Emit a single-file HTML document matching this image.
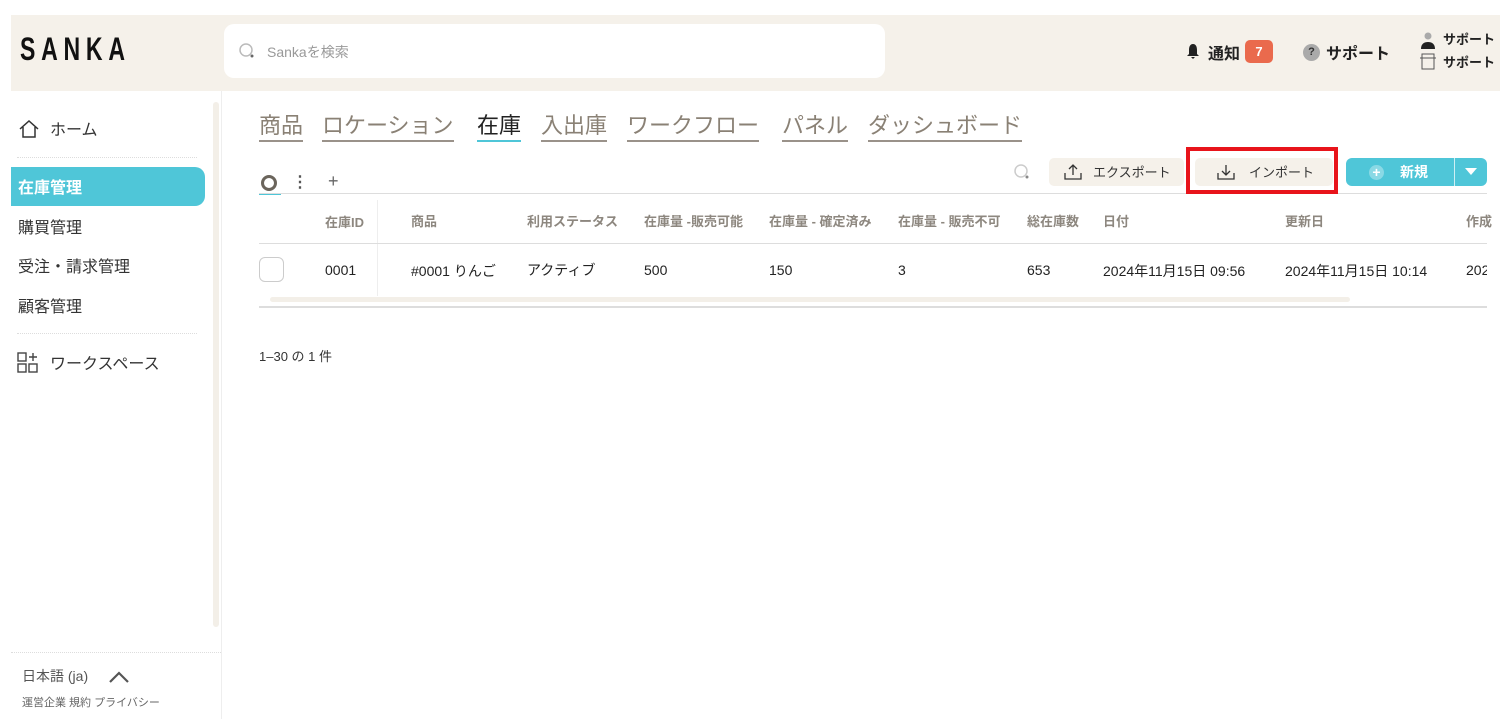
<!DOCTYPE html>
<html><head><meta charset="utf-8"><style>
*{box-sizing:border-box;margin:0;padding:0}
body{width:1500px;height:719px;background:#fff;font-family:"Liberation Sans","Noto Sans CJK JP",sans-serif;color:#222;position:relative;overflow:hidden}
.a{position:absolute}
.hdr{left:11px;top:15px;width:1489px;height:76px;background:#f5f1ea}
.logo{left:20px;top:31px;font-size:32px;font-weight:bold;letter-spacing:8px;color:#111;transform:scaleX(.72);transform-origin:left}
.search{left:224px;top:24px;width:661px;height:54px;background:#fff;border-radius:10px}
.search span{position:absolute;left:43px;top:18px;font-size:14px;color:#999}
.sb{left:11px;top:91px;width:211px;height:628px;border-right:1px solid #eee}
.nav{font-size:16px;color:#333}
.tab{font-size:22px;color:#8a8175;border-bottom:2px solid #9a928a;padding-bottom:0;line-height:28px}
.th{font-size:13px;color:#8d877f;font-weight:bold}
.td{font-size:14px;color:#222}
</style></head><body>
<div class="a hdr"></div>
<div class="a logo">SANKA</div>
<div class="a search"><svg class="a" style="left:14px;top:18px" width="18" height="18"><circle cx="8" cy="8" r="6" fill="none" stroke="#bbb" stroke-width="1.5"/><circle cx="14" cy="14" r="1.5" fill="#666"/></svg><span>Sankaを検索</span></div>
<svg class="a" style="left:1186px;top:43px" width="14" height="16"><path d="M7 1c-3 0-4 3-4 6v4l-2 2h12l-2-2V7c0-3-1-6-4-6zM5 14h4l-2 2z" fill="#222"/></svg>
<div class="a" style="left:1208px;top:40px;font-size:16px;font-weight:bold">通知</div>
<div class="a" style="left:1245px;top:40px;width:28px;height:23px;background:#ea6a4d;border-radius:5px;color:#fff;font-size:13px;font-weight:bold;text-align:center;line-height:23px">7</div>
<div class="a" style="left:1303px;top:44px;width:17px;height:17px;border-radius:50%;background:#aaa;color:#333;font-size:11px;font-weight:bold;text-align:center;line-height:17px">?</div>
<div class="a" style="left:1326px;top:40px;font-size:16px;font-weight:bold">サポート</div>
<svg class="a" style="left:1419px;top:31px" width="18" height="42"><circle cx="9" cy="5" r="3.5" fill="#aaa"/><path d="M2 18c0-5 3-7 7-7s7 2 7 7z" fill="#222"/><rect x="3" y="23" width="12" height="15" fill="none" stroke="#555"/><line x1="1" y1="27" x2="17" y2="27" stroke="#555"/></svg>
<div class="a" style="left:1443px;top:29px;font-size:13px;font-weight:bold">サポート</div>
<div class="a" style="left:1443px;top:52px;font-size:13px;font-weight:bold">サポート</div>

<div class="a sb"></div>
<div class="a" style="left:213px;top:102px;width:6px;height:525px;background:#f3efe8;border-radius:3px"></div>
<svg class="a" style="left:18px;top:119px" width="22" height="20"><path d="M2 10L11 2l9 8M5 8v10h12V8" fill="none" stroke="#333" stroke-width="1.5"/></svg>
<div class="a nav" style="left:50px;top:116px">ホーム</div>
<div class="a" style="left:17px;top:157px;width:180px;border-top:1px dotted #ddd"></div>
<div class="a" style="left:11px;top:167px;width:194px;height:39px;background:#4fc6d8;border-radius:0 10px 10px 0"></div>
<div class="a nav" style="left:18px;top:174px;color:#fff;font-weight:bold">在庫管理</div>
<div class="a nav" style="left:18px;top:214px">購買管理</div>
<div class="a nav" style="left:18px;top:253px">受注・請求管理</div>
<div class="a nav" style="left:18px;top:293px">顧客管理</div>
<div class="a" style="left:17px;top:333px;width:180px;border-top:1px dotted #ddd"></div>
<svg class="a" style="left:17px;top:352px" width="22" height="22"><rect x="1" y="1" width="8" height="8" fill="none" stroke="#444" stroke-width="1.4"/><rect x="1" y="12" width="8" height="8" fill="none" stroke="#444" stroke-width="1.4"/><rect x="12" y="12" width="8" height="8" fill="none" stroke="#444" stroke-width="1.4"/><path d="M16 1v8M12 5h8" stroke="#444" stroke-width="1.4"/></svg>
<div class="a nav" style="left:50px;top:350px">ワークスペース</div>
<div class="a" style="left:11px;top:652px;width:210px;border-top:1px dotted #ddd"></div>
<div class="a" style="left:22px;top:666px;font-size:14px;color:#555">日本語 (ja)</div>
<svg class="a" style="left:108px;top:670px" width="22" height="14"><path d="M2 12l9-9 9 9" fill="none" stroke="#555" stroke-width="2.2"/></svg>
<div class="a" style="left:22px;top:694px;font-size:11px;color:#666">運営企業 規約 プライバシー</div>

<div class="a tab" style="left:259px;top:112px">商品</div>
<div class="a tab" style="left:322px;top:112px">ロケーション</div>
<div class="a tab" style="left:477px;top:112px;color:#222;border-color:#4fc6d8">在庫</div>
<div class="a tab" style="left:541px;top:112px">入出庫</div>
<div class="a tab" style="left:627px;top:112px">ワークフロー</div>
<div class="a tab" style="left:782px;top:112px">パネル</div>
<div class="a tab" style="left:868px;top:112px">ダッシュボード</div>

<div class="a" style="left:261px;top:175px;width:16px;height:16px;border:3px solid #6b655c;border-radius:50%"></div>
<div class="a" style="left:259px;top:193px;width:22px;border-top:2px solid #4fc6d8"></div>
<div class="a" style="left:292px;top:172px;font-size:16px;color:#555;font-weight:bold">⋮</div>
<div class="a" style="left:328px;top:171px;font-size:18px;color:#666">+</div>
<div class="a" style="left:259px;top:193px;width:1228px;border-top:1px solid #ddd"></div>
<svg class="a" style="left:1013px;top:163px" width="18" height="18"><circle cx="8" cy="8" r="6" fill="none" stroke="#ccc" stroke-width="1.5"/><circle cx="14" cy="14" r="1.5" fill="#888"/></svg>
<div class="a" style="left:1049px;top:158px;width:135px;height:28px;background:#f5f1ea;border-radius:5px"></div>
<svg class="a" style="left:1063px;top:163px" width="20" height="18"><path d="M10 12V2M6 6l4-4 4 4M2 10v6h16v-6" fill="none" stroke="#333" stroke-width="1.3"/></svg>
<div class="a" style="left:1093px;top:162px;font-size:13px;color:#333">エクスポート</div>
<div class="a" style="left:1195px;top:158px;width:138px;height:28px;background:#f5f1ea;border-radius:5px"></div>
<div class="a" style="left:1186px;top:147px;width:152px;height:47px;border:4px solid #e8141b"></div>
<svg class="a" style="left:1216px;top:163px" width="20" height="18"><path d="M10 2v10M6 8l4 4 4-4M2 10v6h16v-6" fill="none" stroke="#333" stroke-width="1.3"/></svg>
<div class="a" style="left:1249px;top:162px;font-size:13px;color:#333">インポート</div>
<div class="a" style="left:1346px;top:158px;width:141px;height:28px;background:#4fc6d8;border-radius:6px"></div>
<div class="a" style="left:1454px;top:158px;border-left:1px solid #cfeff4;height:28px"></div>
<div class="a" style="left:1369px;top:165px;width:15px;height:15px;border-radius:50%;background:#8ad9e5;color:#fff;font-size:14px;line-height:14px;text-align:center;font-weight:bold">+</div>
<div class="a" style="left:1400px;top:162px;font-size:14px;color:#fff;font-weight:bold">新規</div>
<svg class="a" style="left:1465px;top:168px" width="12" height="8"><path d="M0 0h12L6 7z" fill="#fff"/></svg>

<div class="a th" style="left:325px;top:212px">在庫ID</div>
<div class="a" style="left:377px;top:200px;height:96px;border-left:1px solid #eee"></div>
<div class="a th" style="left:411px;top:211px">商品</div>
<div class="a th" style="left:527px;top:211px">利用ステータス</div>
<div class="a th" style="left:644px;top:211px">在庫量 -販売可能</div>
<div class="a th" style="left:769px;top:211px">在庫量 - 確定済み</div>
<div class="a th" style="left:898px;top:211px">在庫量 - 販売不可</div>
<div class="a th" style="left:1027px;top:211px">総在庫数</div>
<div class="a th" style="left:1103px;top:211px">日付</div>
<div class="a th" style="left:1285px;top:211px">更新日</div>
<div class="a th" style="left:1466px;top:211px">作成</div>
<div class="a" style="left:259px;top:243px;width:1228px;border-top:1px solid #ddd"></div>
<div class="a" style="left:259px;top:257px;width:25px;height:25px;border:1px solid #ccc;border-radius:6px"></div>
<div class="a td" style="left:325px;top:262px">0001</div>
<div class="a td" style="left:411px;top:261px">#0001 りんご</div>
<div class="a td" style="left:527px;top:260px">アクティブ</div>
<div class="a td" style="left:644px;top:262px">500</div>
<div class="a td" style="left:769px;top:262px">150</div>
<div class="a td" style="left:898px;top:262px">3</div>
<div class="a td" style="left:1027px;top:262px">653</div>
<div class="a td" style="left:1103px;top:261px">2024年11月15日 09:56</div>
<div class="a td" style="left:1285px;top:261px">2024年11月15日 10:14</div>
<div class="a td" style="left:1466px;top:262px;width:21px;overflow:hidden">202</div>
<div class="a" style="left:270px;top:297px;width:1080px;height:5px;background:#f3efe8;border-radius:3px"></div>
<div class="a" style="left:259px;top:306px;width:1228px;border-top:2px solid #ddd"></div>
<div class="a" style="left:259px;top:346px;font-size:13px;color:#333">1–30 の 1 件</div>
</body></html>
